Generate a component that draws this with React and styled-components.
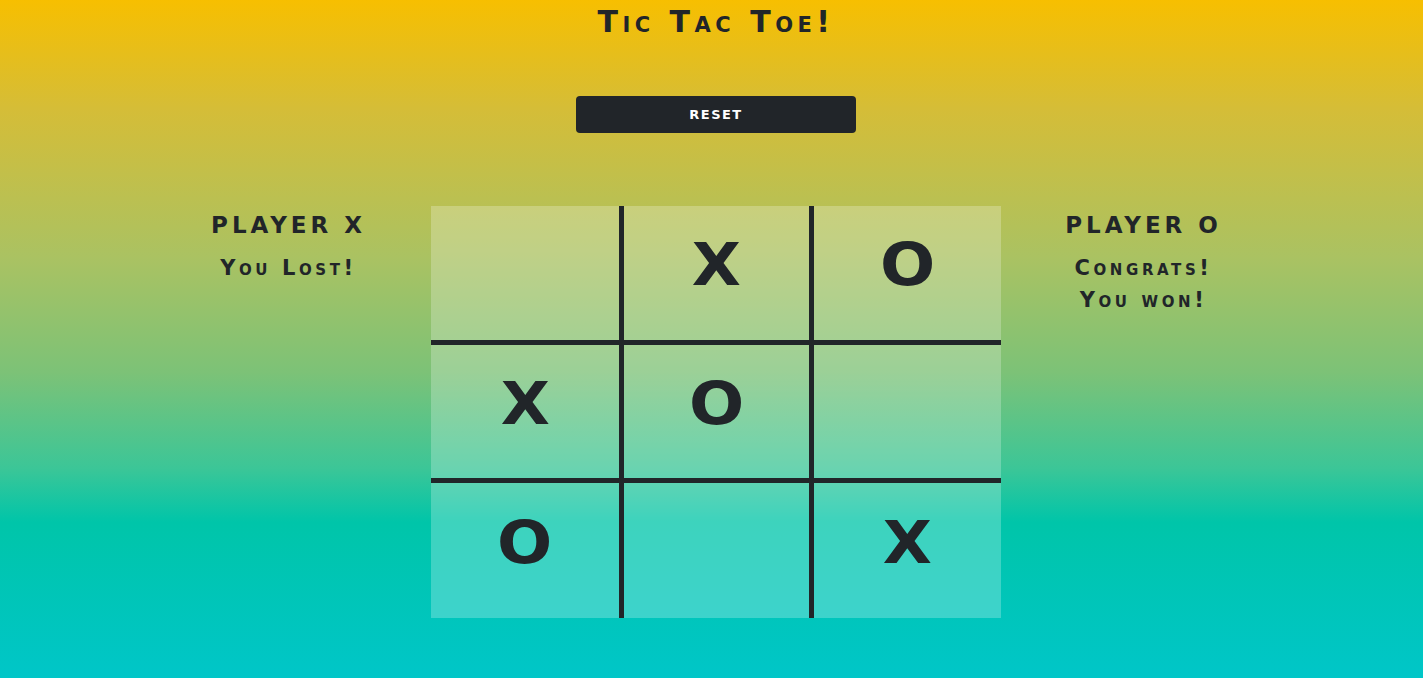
import React from "react";
import styled, { createGlobalStyle } from "styled-components";

const Global = createGlobalStyle`
  html, body { margin: 0; padding: 0; }
  body {
    min-height: 100vh;
    font-family: "DejaVu Sans", "Liberation Sans", sans-serif;
    color: #212529;
    background: linear-gradient(
      to bottom,
      #f7bf00 0%,
      #d5bd37 16%,
      #aac262 38%,
      #7cc277 55%,
      #3cc697 69%,
      #00c5a9 77%,
      #00c6c8 100%
    );
    overflow: hidden;
  }
`;

const Page = styled.div`
  height: 100vh;
  box-sizing: border-box;
  padding-left: 9px;
  display: flex;
  flex-direction: column;
  align-items: center;
  font-variant: small-caps;
`;

const Title = styled.h1`
  margin: 4px 0 0;
  font-size: 30px;
  font-weight: bold;
  letter-spacing: 4.5px;
  line-height: 36px;
`;

const ResetButton = styled.button`
  margin-top: 56px;
  width: 280px;
  height: 37px;
  border: none;
  border-radius: 4px;
  background: #212529;
  color: #fff;
  font-family: inherit;
  font-weight: bold;
  font-size: 13px;
  letter-spacing: 1.5px;
  cursor: pointer;
`;

const Arena = styled.div`
  margin-top: 73px;
  display: grid;
  grid-template-columns: 285px 570px 285px;
`;

const PlayerPanel = styled.div`
  display: flex;
  flex-direction: column;
  align-items: center;
  text-align: center;
`;

const PlayerName = styled.h2`
  margin: 4px 0 0;
  font-size: 23px;
  font-weight: bold;
  letter-spacing: 4px;
  line-height: 30px;
  text-transform: uppercase;
`;

const Status = styled.div`
  margin-top: 12px;
  font-size: 21px;
  font-weight: bold;
  line-height: 32px;
  letter-spacing: 3.6px;
`;

const Board = styled.div`
  display: grid;
  grid-template-columns: 193px 190px 187px;
  grid-template-rows: 139px 138px 135px;
`;

const Cell = styled.div`
  box-sizing: border-box;
  background: rgba(255, 255, 255, 0.24);
  border-right: ${(p) => (p.$right ? "5px solid #212529" : "none")};
  border-bottom: ${(p) => (p.$bottom ? "5px solid #212529" : "none")};
  display: flex;
  align-items: center;
  justify-content: center;
  padding-bottom: 16px;
  font-size: 58px;
  font-weight: bold;
  line-height: 1;
  text-transform: uppercase;
  cursor: pointer;
`;

const Mark = styled.span`
  display: inline-block;
  transform: scaleX(${(p) => (p.$o ? 1.12 : 1.1)});
`;

const cells = ["", "X", "O", "X", "O", "", "O", "", "X"];

export default function App() {
  return (
    <>
      <Global />
      <Page>
        <Title>Tic Tac Toe!</Title>
        <ResetButton>RESET</ResetButton>
        <Arena>
          <PlayerPanel>
            <PlayerName>Player X</PlayerName>
            <Status>You Lost!</Status>
          </PlayerPanel>
          <Board>
            {cells.map((v, i) => (
              <Cell key={i} $right={i % 3 < 2} $bottom={i < 6}>
                {v && <Mark $o={v === "O"}>{v}</Mark>}
              </Cell>
            ))}
          </Board>
          <PlayerPanel>
            <PlayerName>Player O</PlayerName>
            <Status>
              Congrats!
              <br />
              You won!
            </Status>
          </PlayerPanel>
        </Arena>
      </Page>
    </>
  );
}
